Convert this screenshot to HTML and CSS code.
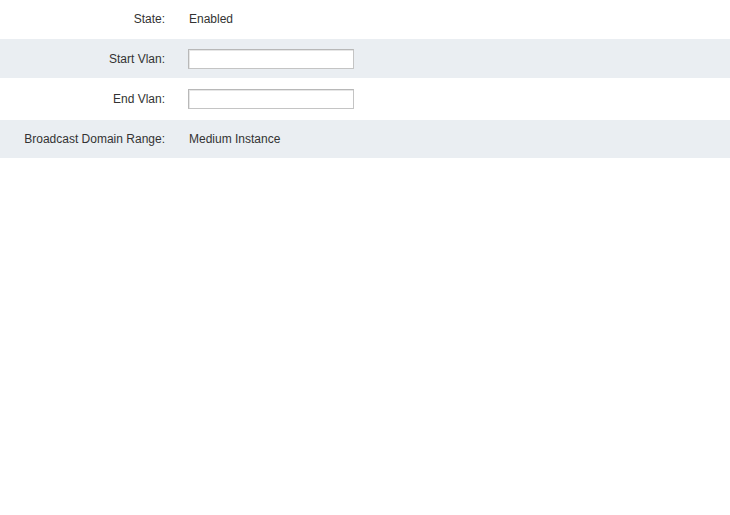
FILE: index.html
```html
<!DOCTYPE html>
<html>
<head>
<meta charset="utf-8">
<link rel="stylesheet" href="styles.css">
</head>
<body>
<div class="form">
  <div class="row r1">
    <div class="label">State:</div>
    <div class="value">Enabled</div>
  </div>
  <div class="row alt r2">
    <div class="label">Start Vlan:</div>
    <div class="value"><input class="field" type="text"></div>
  </div>
  <div class="row r3">
    <div class="label">End Vlan:</div>
    <div class="value"><input class="field" type="text"></div>
  </div>
  <div class="row alt r4">
    <div class="label">Broadcast Domain Range:</div>
    <div class="value">Medium Instance</div>
  </div>
</div>
</body>
</html>
```
FILE: styles.css
```css
html, body {
  margin: 0;
  padding: 0;
  background: #ffffff;
}
body {
  font-family: "Liberation Sans", Arial, sans-serif;
  font-size: 12px;
  color: #333333;
}
.form {
  display: flex;
  flex-direction: column;
}
.row {
  display: flex;
  align-items: center;
  box-sizing: border-box;
}
.r1 { height: 39px; padding-bottom: 2px; }
.r2 { height: 39px; padding-top: 1px; }
.r3 { height: 42px; }
.r4 { height: 38px; }
.alt {
  background: #eaeef2;
}
.label {
  width: 165px;
  text-align: right;
  flex: none;
}
.value {
  padding-left: 24px;
  display: flex;
  align-items: center;
}
.field {
  box-sizing: border-box;
  width: 166px;
  height: 20px;
  margin: 0 0 0 -1px;
  padding: 0 3px;
  border: 1px solid #c4c4c4;
  border-top-color: #b8b8b8;
  border-left-color: #b8b8b8;
  box-shadow: inset 1px 1px 0 #e6e6e6;
  background: #ffffff;
  font-family: "Liberation Sans", Arial, sans-serif;
  font-size: 12px;
  outline: none;
}
```
